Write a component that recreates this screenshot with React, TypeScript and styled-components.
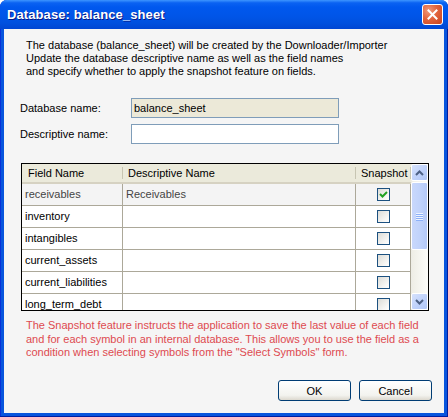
import { createGlobalStyle } from "styled-components";
import styled from "styled-components";

const GlobalStyle = createGlobalStyle`
  html, body {
    margin: 0;
    padding: 0;
    background: #ffffff;
  }
  body {
    font-family: Tahoma, "Liberation Sans", Arial, sans-serif;
    font-size: 11px;
  }
`;

// rows of the field grid
const fields = [
  { name: "receivables", desc: "Receivables", snapshot: true, current: true },
  { name: "inventory", desc: "", snapshot: false, current: false },
  { name: "intangibles", desc: "", snapshot: false, current: false },
  { name: "current_assets", desc: "", snapshot: false, current: false },
  { name: "current_liabilities", desc: "", snapshot: false, current: false },
  { name: "long_term_debt", desc: "", snapshot: false, current: false },
];

export default function App() {
  return (
    <>
      <GlobalStyle />
      <Window>
        <TitleBar>
          <Title>Database: balance_sheet</Title>
          <CloseButton aria-label="Close">
            <svg width="11" height="11" viewBox="0 0 11 11">
              <path d="M1.5 1.5 L9.5 9.5 M9.5 1.5 L1.5 9.5" stroke="#fff" strokeWidth="2" strokeLinecap="square" />
            </svg>
          </CloseButton>
        </TitleBar>
        <Client>
          <Intro>
            The database (balance_sheet) will be created by the Downloader/Importer
            <br />
            Update the database descriptive name as well as the field names
            <br />
            and specify whether to apply the snapshot feature on fields.
          </Intro>

          <Form>
            <Label>Database name:</Label>
            <TextBox readOnly $disabled value="balance_sheet" />
            <Label>Descriptive name:</Label>
            <TextBox defaultValue="" />
          </Form>

          <Grid>
            <GridBody>
              <HeaderRow>
                <HeaderCell>Field Name</HeaderCell>
                <HeaderCell>Descriptive Name</HeaderCell>
                <HeaderCell>Snapshot</HeaderCell>
              </HeaderRow>
              {fields.map((f) => (
                <Row key={f.name} $current={f.current}>
                  <Cell>{f.name}</Cell>
                  <Cell>{f.desc}</Cell>
                  <CheckCell>
                    <CheckBox>
                      {f.snapshot && (
                        <svg width="9" height="9" viewBox="0 0 9 9">
                          <path d="M1 4 L3.5 6.5 L8 2" stroke="#21a121" strokeWidth="2" fill="none" />
                        </svg>
                      )}
                    </CheckBox>
                  </CheckCell>
                </Row>
              ))}
            </GridBody>
            <ScrollBar>
              <ScrollButton>
                <svg width="9" height="6" viewBox="0 0 9 6">
                  <path d="M1 5 L4.5 1.5 L8 5" stroke="#4d6185" strokeWidth="2" fill="none" />
                </svg>
              </ScrollButton>
              <Thumb>
                <Grip />
                <Grip />
                <Grip />
                <Grip />
              </Thumb>
              <Track />
              <ScrollButton>
                <svg width="9" height="6" viewBox="0 0 9 6">
                  <path d="M1 1 L4.5 4.5 L8 1" stroke="#4d6185" strokeWidth="2" fill="none" />
                </svg>
              </ScrollButton>
            </ScrollBar>
          </Grid>

          <Note>
            The Snapshot feature instructs the application to save the last value of each field
            <br />
            and for each symbol in an internal database. This allows you to use the field as a
            <br />
            condition when selecting symbols from the "Select Symbols" form.
          </Note>

          <ButtonBar>
            <PushButton>OK</PushButton>
            <PushButton>Cancel</PushButton>
          </ButtonBar>
        </Client>
      </Window>
    </>
  );
}

const Window = styled.div`
  width: 448px;
  height: 417px;
  box-sizing: border-box;
  display: flex;
  flex-direction: column;
  background: #0855dd;
  border-radius: 7px 7px 0 0;
  box-shadow: inset -1px -1px 0 #001ea0, inset 1px 0 0 #0831d9;
  overflow: hidden;
`;

const TitleBar = styled.div`
  height: 29px;
  flex: 0 0 29px;
  display: flex;
  align-items: center;
  justify-content: space-between;
  padding: 0 5px 0 7px;
  box-sizing: border-box;
  background: linear-gradient(
    to bottom,
    #3d95ff 0%,
    #0a62f2 10%,
    #0058ee 25%,
    #0055e8 55%,
    #0050de 80%,
    #0046d3 100%
  );
`;

const Title = styled.div`
  font-family: "Liberation Sans", Arial, sans-serif;
  font-weight: bold;
  font-size: 13px;
  color: #ffffff;
  text-shadow: 1px 1px 0 #0a1883;
  letter-spacing: 0.1px;
`;

const CloseButton = styled.div`
  width: 21px;
  height: 21px;
  box-sizing: border-box;
  border: 1px solid #ffffff;
  border-radius: 3px;
  display: flex;
  align-items: center;
  justify-content: center;
  background: radial-gradient(circle at 30% 30%, #f09a7c 0%, #e2643d 45%, #c8421d 100%);
`;

const Client = styled.div`
  flex: 1;
  margin: 0 4px 4px 4px;
  background: #f5f5f5;
  display: flex;
  flex-direction: column;
  color: #000000;
`;

const Intro = styled.p`
  margin: 10px 0 0 22px;
  line-height: 13px;
  font-size: 11px;
`;

const Form = styled.div`
  margin: 20px 0 0 16px;
  display: grid;
  grid-template-columns: 111px 208px;
  row-gap: 6px;
  align-items: center;
`;

const Label = styled.label`
  font-size: 11px;
`;

const TextBox = styled.input<{ $disabled?: boolean }>`
  height: 20px;
  box-sizing: border-box;
  border: 1px solid #7f9db9;
  padding: 0 2px;
  margin: 0;
  font-family: Tahoma, "Liberation Sans", Arial, sans-serif;
  font-size: 11px;
  color: #000000;
  background: ${(p) => (p.$disabled ? "#ece9d8" : "#ffffff")};
  outline: none;
`;

const Grid = styled.div`
  margin: 19px 0 0 17px;
  width: 408px;
  height: 148px;
  box-sizing: border-box;
  border: 1px solid #000000;
  display: flex;
  background: #ffffff;
`;

const GridBody = styled.div`
  flex: 1;
  overflow: hidden;
`;

const HeaderRow = styled.div`
  display: grid;
  grid-template-columns: 101px 233px 55px;
  height: 20px;
  box-sizing: border-box;
  background: #ebeadb;
  border-bottom: 2px solid #d6d2c2;
`;

const HeaderCell = styled.div`
  position: relative;
  padding-left: 6px;
  line-height: 18px;
  white-space: nowrap;
  overflow: hidden;
  &::after {
    content: "";
    position: absolute;
    right: 0;
    top: 3px;
    bottom: 3px;
    width: 1px;
    background: #c7c5b2;
    box-shadow: 1px 0 0 #ffffff;
  }
  &:nth-child(2) {
    padding-left: 5px;
  }
  &:nth-child(3) {
    padding-left: 5px;
  }
`;

const Row = styled.div<{ $current?: boolean }>`
  display: grid;
  grid-template-columns: 101px 233px 55px;
  height: 22px;
  background: ${(p) => (p.$current ? "#f4f4f4" : "#ffffff")};
  color: ${(p) => (p.$current ? "#444444" : "#000000")};
`;

const Cell = styled.div`
  border-right: 1px solid #aca899;
  border-bottom: 1px solid #aca899;
  padding-left: 3px;
  line-height: 21px;
  white-space: nowrap;
  overflow: hidden;
`;

const CheckCell = styled(Cell)`
  padding-left: 0;
  display: flex;
  align-items: center;
  justify-content: center;
`;

const CheckBox = styled.div`
  width: 13px;
  height: 13px;
  box-sizing: border-box;
  border: 1px solid #1c5180;
  background: linear-gradient(135deg, #dcdcd7 0%, #f6f6f4 70%, #ffffff 100%);
  display: flex;
  align-items: center;
  justify-content: center;
`;

const ScrollBar = styled.div`
  width: 17px;
  flex: 0 0 17px;
  display: flex;
  flex-direction: column;
  background: linear-gradient(to right, #eeede5, #fdfdfa);
`;

const ScrollButton = styled.div`
  height: 17px;
  box-sizing: border-box;
  border: 1px solid #ffffff;
  border-radius: 2px;
  background: linear-gradient(135deg, #d6e2fd 0%, #c1d3fb 50%, #b0c6f6 100%);
  display: flex;
  align-items: center;
  justify-content: center;
`;

const Thumb = styled.div`
  height: 68px;
  margin-top: 1px;
  box-sizing: border-box;
  border: 1px solid #ffffff;
  border-radius: 2px;
  background: linear-gradient(to right, #c9d8fc 0%, #c1d3fb 50%, #b4c9f8 100%);
  display: flex;
  flex-direction: column;
  align-items: center;
  justify-content: center;
  gap: 1px;
`;

const Grip = styled.div`
  width: 7px;
  height: 1px;
  background: #eef4fe;
  box-shadow: 0 1px 0 #8cb0f8;
`;

const Track = styled.div`
  flex: 1;
`;

const Note = styled.p`
  margin: 8px 0 0 22px;
  line-height: 13.5px;
  font-size: 11px;
  color: #de4a50;
`;

const ButtonBar = styled.div`
  margin-top: auto;
  margin-bottom: 12px;
  margin-right: 12px;
  display: flex;
  justify-content: flex-end;
  gap: 8px;
`;

const PushButton = styled.button`
  width: 73px;
  height: 21px;
  box-sizing: border-box;
  border: 1px solid #003c74;
  border-radius: 3px;
  background: linear-gradient(to bottom, #ffffff 0%, #f3f3ef 75%, #dcd8ce 100%);
  font-family: Tahoma, "Liberation Sans", Arial, sans-serif;
  font-size: 11px;
  color: #000000;
  padding: 0;
`;
